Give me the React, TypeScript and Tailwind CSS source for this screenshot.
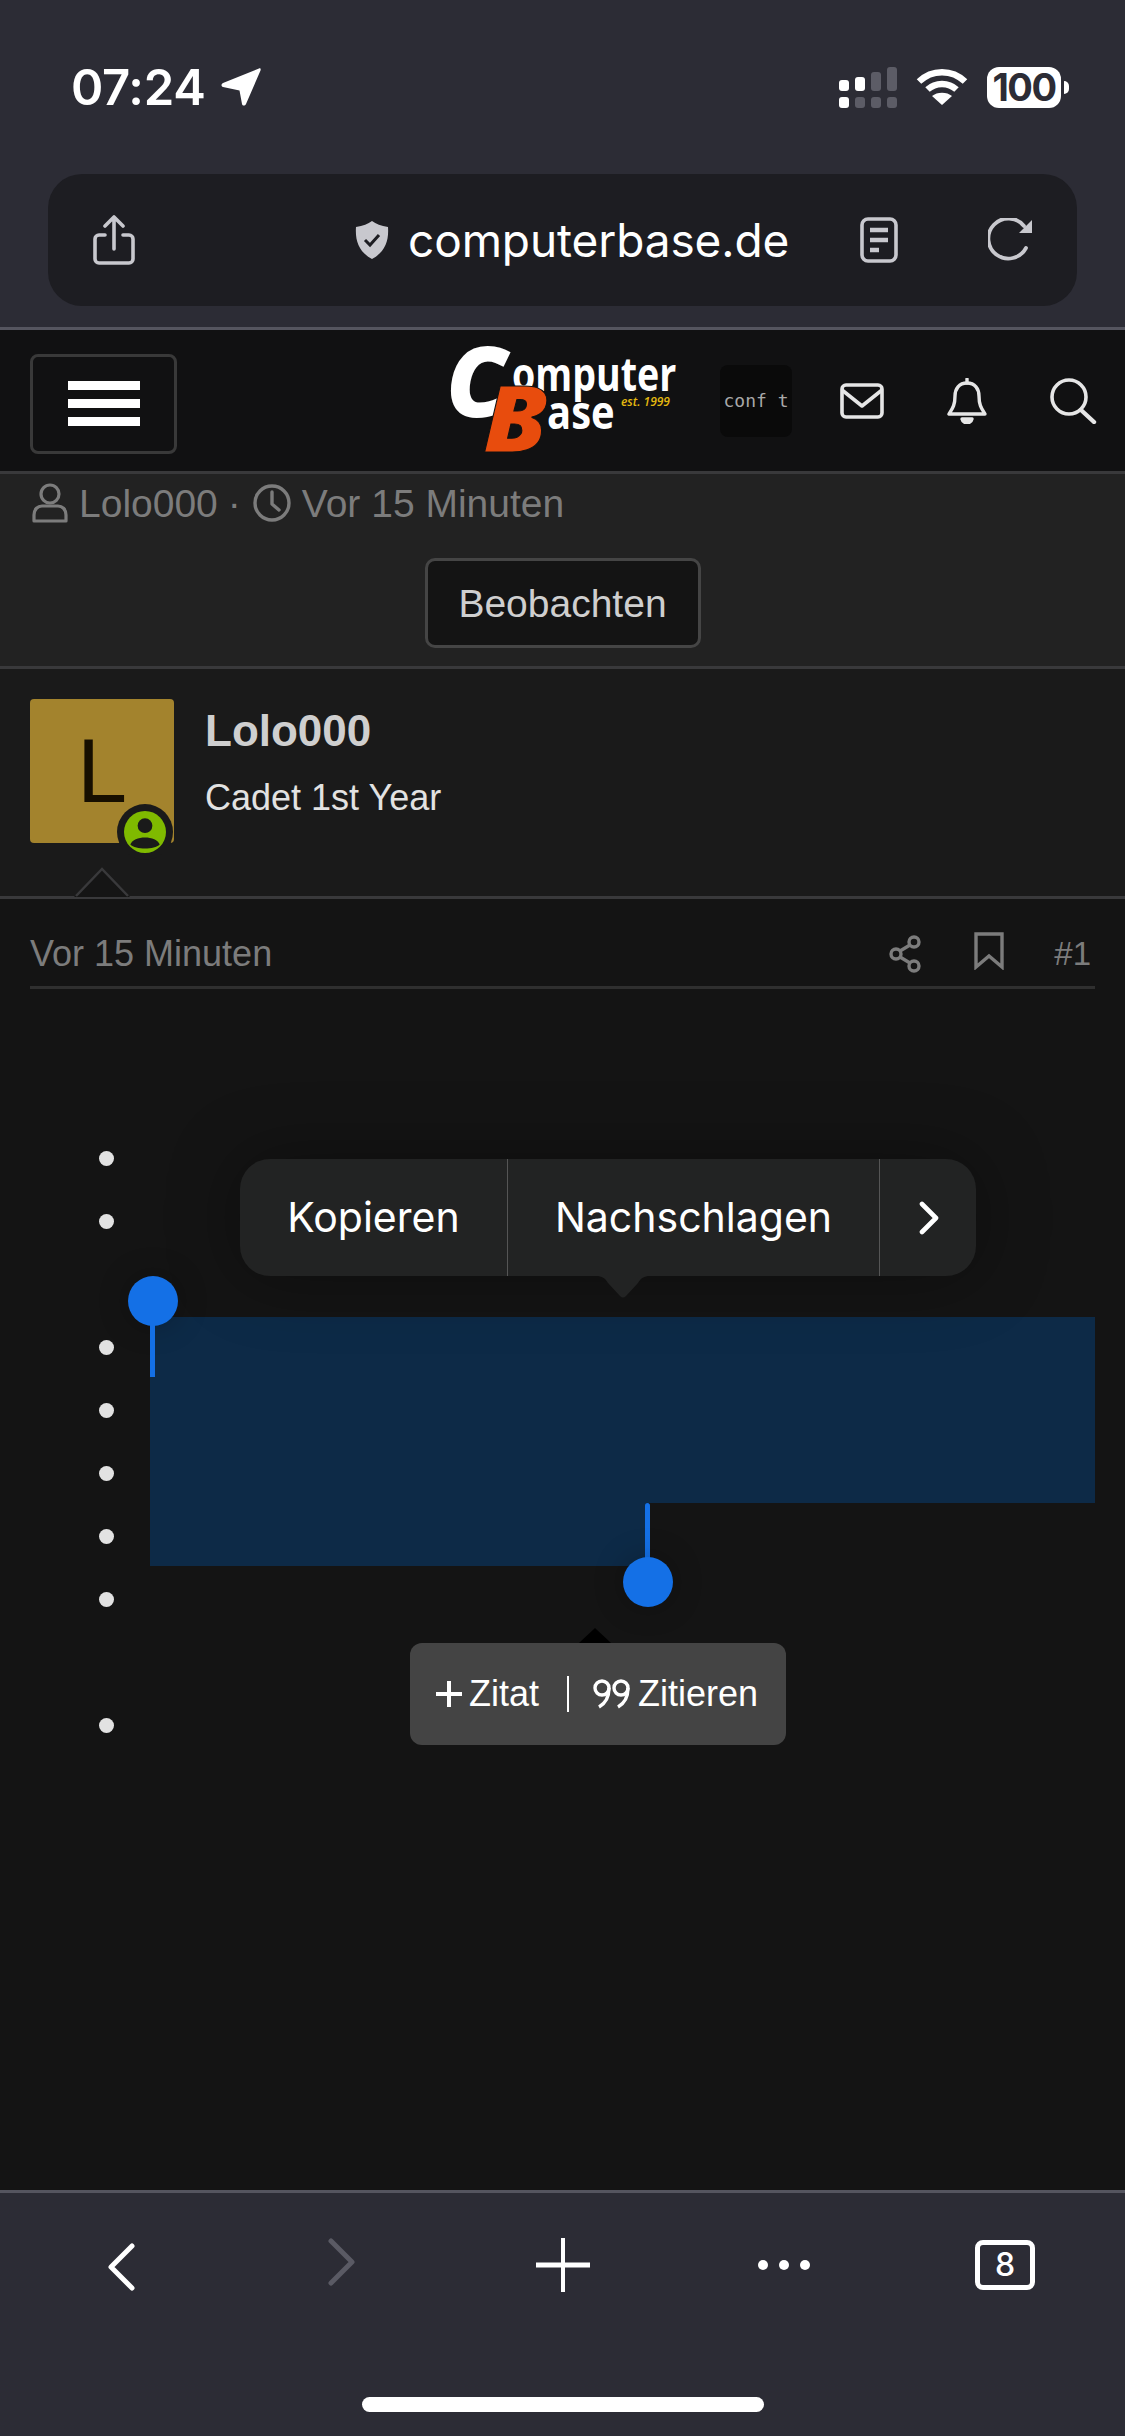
import React from "react";

const sf = "font-['Inter','Liberation_Sans',sans-serif]";
const web = "font-['Liberation_Sans','Arial',sans-serif]";

function Signal() {
  const bars = [
    ["h-[11px]", "bg-white", "bg-white"],
    ["h-[14px]", "bg-white", "bg-[#5c5c66]"],
    ["h-[19px]", "bg-[#5c5c66]", "bg-[#5c5c66]"],
    ["h-[24px]", "bg-[#5c5c66]", "bg-[#5c5c66]"],
  ];
  return (
    <div className="flex items-end gap-[6px]">
      {bars.map((b, i) => (
        <div key={i} className="flex flex-col items-center gap-[6px]">
          <div className={`w-[10px] rounded-[3px] ${b[0]} ${b[1]}`} />
          <div className={`w-[10px] h-[11px] rounded-[3px] ${b[2]}`} />
        </div>
      ))}
    </div>
  );
}

function Wifi() {
  return (
    <svg width="52" height="38" viewBox="0 0 52 38" fill="none" stroke="white" strokeWidth="6.5">
      <path d="M3 13.5C16 1 36 1 49 13.5" />
      <path d="M11.5 21.5C19.5 14 32.5 14 40.5 21.5" />
      <path d="M26 37L16 28C21 23.5 31 23.5 36 28Z" fill="white" stroke="none" />
    </svg>
  );
}

function Battery() {
  return (
    <div className="flex items-center gap-[3px]">
      <div className={`w-[74px] h-[41px] rounded-[12px] bg-white flex items-center justify-center text-[#2c2c35] text-[38px] font-bold tracking-[-1.5px] leading-none ${sf}`}>
        100
      </div>
      <div className="w-[5px] h-[13px] rounded-r-[5px] bg-white" />
    </div>
  );
}

function StatusBar() {
  return (
    <div className="h-[174px] pl-[71px] pr-[56px] flex items-center justify-between">
      <div className="flex items-center gap-[16px]">
        <span className={`text-[49px] font-semibold leading-none tracking-[-0.3px] text-white ${sf}`}>07:24</span>
        <svg width="40" height="38" viewBox="0 0 40 38" fill="white">
          <path d="M38 0.5C39.5 0 40 1 39.5 2.5L25 36C24 38 21.5 38 21 36L18.5 22.5L2 19C0 18.5 0 16 2 15Z" />
        </svg>
      </div>
      <div className="flex items-center gap-[19px]">
        <Signal />
        <Wifi />
        <Battery />
      </div>
    </div>
  );
}

function AddressBar() {
  return (
    <div className="mx-[48px] h-[132px] rounded-[34px] bg-[#1d1d22] flex items-center text-[#c8c8ce]">
      <svg className="ml-[44px]" width="44" height="50" viewBox="0 0 44 50" fill="none" stroke="currentColor" strokeWidth="3.6" strokeLinecap="round" strokeLinejoin="round">
        <path d="M13 20H7a4 4 0 0 0-4 4v20a4 4 0 0 0 4 4h30a4 4 0 0 0 4-4V24a4 4 0 0 0-4-4h-6" />
        <path d="M22 34V3M13 11l9-9 9 9" />
      </svg>
      <svg className="ml-[219px]" width="34" height="38" viewBox="0 0 34 38">
        <path d="M17 0C21 3 26 5 33 6C34 20 30 31 17 38C4 31 0 20 1 6C8 5 13 3 17 0Z" fill="currentColor" />
        <path d="M10 19l5 5 9-10" fill="none" stroke="#1d1d22" strokeWidth="3" />
      </svg>
      <span className={`ml-[19px] w-[382px] text-[46px] leading-none text-white whitespace-nowrap tracking-[-0.1px] ${sf}`}>computerbase.de</span>
      <svg className="ml-[70px]" width="38" height="46" viewBox="0 0 38 46" fill="none">
        <rect x="2" y="2" width="34" height="42" rx="6" stroke="currentColor" strokeWidth="3.6" />
        <path d="M10 13h18M10 23h18M10 33h9" stroke="currentColor" strokeWidth="4.5" />
      </svg>
      <svg className="ml-[90px]" width="46" height="44" viewBox="0 0 46 44" fill="none" stroke="currentColor" strokeWidth="3.8" strokeLinecap="round">
        <path d="M38 30A20 20 0 1 1 36 8" />
        <path d="M44 2V15H31Z" fill="currentColor" stroke="none" />
      </svg>
    </div>
  );
}

function Logo() {
  const f = "font-['Open_Sans','Liberation_Sans',sans-serif]";
  return (
    <div className={`relative w-[230px] h-[104px] leading-none ${f}`}>
      <span className="absolute left-[63px] top-[1px] text-[47px] font-bold text-white origin-left scale-x-[0.8] whitespace-nowrap">omputer</span>
      <span className="absolute left-[-3px] top-[-18px] text-[97px] font-extrabold italic text-white">C</span>
      <span className="absolute left-[98px] top-[39px] text-[47px] font-bold text-white origin-left scale-x-[0.85]">ase</span>
      <span className="absolute left-[34px] top-[22px] text-[92px] font-extrabold italic text-[#e84c0d] origin-left scale-x-[1.12] [-webkit-text-stroke:1px_#111]">B</span>
      <span className="absolute left-[172px] top-[47px] text-[12px] font-semibold italic text-[#e4b90f] whitespace-nowrap">est. 1999</span>
    </div>
  );
}

function HeaderBar() {
  return (
    <header className="relative h-[144px] bg-[#111112] border-b-[3px] border-[#39393b] flex items-center">
      <div className="ml-[30px] mt-[6px] w-[147px] h-[100px] rounded-[8px] border-[3px] border-[#393939] flex flex-col items-center justify-center gap-[9px]">
        <div className="w-[72px] h-[9px] bg-white" />
        <div className="w-[72px] h-[9px] bg-white" />
        <div className="w-[72px] h-[9px] bg-white" />
      </div>
      <div className="ml-[272px]"><Logo /></div>
      <div className="ml-[41px] w-[72px] h-[72px] rounded-[8px] bg-[#0a0a0a] flex items-center justify-center overflow-hidden">
        <span className="font-['DejaVu_Sans_Mono',monospace] text-[18px] text-[#a8a8a8] whitespace-pre leading-none">conf t</span>
      </div>
      <svg className="ml-[48px]" width="44" height="36" viewBox="0 0 44 36" fill="none" stroke="#e6e6e6" strokeWidth="3.6" strokeLinejoin="round">
        <rect x="2" y="2" width="40" height="32" rx="4" />
        <path d="M2 7L22 23L42 7" />
      </svg>
      <svg className="ml-[63px]" width="40" height="46" viewBox="0 0 40 46" fill="none" stroke="#e6e6e6" strokeWidth="3.4" strokeLinejoin="round">
        <path d="M20 5C12 5 8 11 8 18C8 28 5 31 2 36H38C35 31 32 28 32 18C32 11 28 5 20 5Z" />
        <path d="M20 1V5" strokeLinecap="round" />
        <path d="M15 41C16 46 24 46 25 41Z" fill="#e6e6e6" />
      </svg>
      <svg className="ml-[62px]" width="48" height="46" viewBox="0 0 48 46" fill="none" stroke="#e6e6e6" strokeWidth="3.6" strokeLinecap="round">
        <circle cx="20" cy="19" r="17" />
        <path d="M32 32L45 44" strokeWidth="4.4" />
      </svg>
    </header>
  );
}

function UserOutline() {
  return (
    <svg width="36" height="40" viewBox="0 0 36 40" fill="none" stroke="#7c7c7c" strokeWidth="3.2">
      <circle cx="18" cy="11" r="9" />
      <path d="M2 38V32C2 26 6 23 10 23H26C30 23 34 26 34 32V38Z" strokeLinejoin="round" />
    </svg>
  );
}

function ThreadInfo() {
  return (
    <section className="h-[195px] bg-[#222222] border-b-[3px] border-[#39393b]">
      <div className={`h-[58px] pl-[32px] flex items-center text-[39px] leading-none text-[#7c7c7c] ${web}`}>
        <UserOutline />
        <span className="ml-[11px]">Lolo000</span>
        <span className="ml-[10px]">·</span>
        <svg className="ml-[12px]" width="38" height="38" viewBox="0 0 38 38" fill="none" stroke="#7c7c7c" strokeWidth="3.4" strokeLinecap="round" strokeLinejoin="round">
          <circle cx="19" cy="19" r="17" />
          <path d="M19 8V20L26 26" />
        </svg>
        <span className="ml-[11px]">Vor 15 Minuten</span>
      </div>
      <div className="flex justify-center mt-[26px]">
        <div className={`w-[276px] h-[90px] pt-[2px] rounded-[10px] bg-[#141414] border-[3px] border-[#454545] flex items-center justify-center text-[39px] text-[#cfcfcf] ${web}`}>
          Beobachten
        </div>
      </div>
    </section>
  );
}

function UserCard() {
  return (
    <section className="relative h-[230px] bg-[#1a1a1a] border-b-[3px] border-[#39393b] pt-[30px] pl-[30px] flex">
      <div className="relative w-[144px] h-[144px] rounded-[4px] bg-[#a3832d] flex items-center justify-center">
        <span className={`text-[90px] leading-none text-[#170f00] ${web}`}>L</span>
        <div className="absolute right-[1px] bottom-[-17px] w-[56px] h-[56px] rounded-full bg-[#1a1a1a] flex items-center justify-center">
          <svg width="42" height="42" viewBox="0 0 40 40">
            <circle cx="20" cy="20" r="20" fill="#7fba00" />
            <circle cx="20" cy="14" r="7" fill="#1a1a1a" />
            <path d="M6 32C9 23 31 23 34 32C29 37 11 37 6 32Z" fill="#1a1a1a" />
          </svg>
        </div>
      </div>
      <div className={`ml-[31px] ${web}`}>
        <div className="mt-[9px] text-[44px] leading-[46px] font-bold text-[#cfcfcf]">Lolo000</div>
        <div className="mt-[24px] text-[36px] leading-[40px] text-[#e2e2e2]">Cadet 1st Year</div>
      </div>
      <svg className="absolute left-[74px] bottom-[-3px]" width="56" height="32" viewBox="0 0 56 32">
        <path d="M0 30L28 2L56 30Z" fill="#151515" />
        <path d="M2 29L28 2L54 29" fill="none" stroke="#39393b" strokeWidth="2.5" />
      </svg>
    </section>
  );
}

function PostHead() {
  return (
    <div className={`mx-[30px] h-[90px] pt-[22px] border-b-[3px] border-[#2f2f2f] flex items-center text-[36px] text-[#7c7c7c] ${web}`}>
      <span>Vor 15 Minuten</span>
      <svg className="ml-auto" width="34" height="38" viewBox="0 0 34 38" fill="none" stroke="#7c7c7c" strokeWidth="3.4">
        <circle cx="26" cy="7" r="5" />
        <circle cx="8" cy="19" r="5" />
        <circle cx="26" cy="31" r="5" />
        <path d="M12 16L22 10M12 22L22 28" />
      </svg>
      <svg className="ml-[52px] mt-[-6px]" width="30" height="38" viewBox="0 0 30 38" fill="none" stroke="#7c7c7c" strokeWidth="3.4" strokeLinejoin="miter">
        <path d="M2 2H28V35L15 24L2 35Z" />
      </svg>
      <span className="ml-[50px] text-[33px] mr-[4px]">#1</span>
    </div>
  );
}

function Bullets() {
  const items = [true, true, false, true, true, true, true, true, false, true];
  return (
    <ul className="pt-[138px] pl-[99px]">
      {items.map((v, i) => (
        <li key={i} className="h-[63px] flex items-center">
          {v && <span className="w-[15px] h-[15px] rounded-full bg-[#e2e2e2]" />}
        </li>
      ))}
    </ul>
  );
}

function Overlays() {
  return (
    <>
      {/* text selection */}
      <div className="absolute left-[150px] top-[1317px] w-[945px] h-[186px] bg-[#0d2a47]" />
      <div className="absolute left-[150px] top-[1503px] w-[497px] h-[63px] bg-[#0d2a47]" />
      {/* handles */}
      <div className="absolute left-[128px] top-[1276px] w-[50px] h-[50px] rounded-full bg-[#1470e6] shadow-[0_0_30px_rgba(0,0,0,0.25)]" />
      <div className="absolute left-[150px] top-[1320px] w-[5px] h-[57px] bg-[#1470e6]" />
      <div className="absolute left-[645px] top-[1503px] w-[5px] h-[60px] rounded-t-full bg-[#1470e6]" />
      <div className="absolute left-[623px] top-[1557px] w-[50px] h-[50px] rounded-full bg-[#1470e6] shadow-[0_0_30px_rgba(0,0,0,0.25)]" />
      {/* callout */}
      <div className={`absolute left-[240px] top-[1159px] w-[736px] h-[117px] rounded-[30px] bg-[#222323] shadow-[0_0_70px_rgba(0,0,0,0.35)] flex items-center text-[41px] text-white ${sf}`}>
        <div className="w-[268px] h-full flex items-center justify-center border-r-[1.5px] border-[#555]">Kopieren</div>
        <div className="w-[372px] h-full flex items-center justify-center border-r-[1.5px] border-[#555]">Nachschlagen</div>
        <div className="flex-1 flex items-center justify-center pl-[2px]">
          <svg width="20" height="34" viewBox="0 0 20 34" fill="none" stroke="white" strokeWidth="4.6" strokeLinecap="round" strokeLinejoin="round">
            <path d="M3 3L17 17L3 31" />
          </svg>
        </div>
      </div>
      <svg className="absolute left-[596px] top-[1276px]" width="54" height="22" viewBox="0 0 54 22">
        <path d="M0 0C6 0 9 2 12 7L24 20C26 22 28 22 30 20L42 7C45 2 48 0 54 0Z" fill="#222323" />
      </svg>
      {/* quote tooltip */}
      <svg className="absolute left-[579px] top-[1628px]" width="32" height="15" viewBox="0 0 32 15">
        <path d="M16 0L32 15H0Z" fill="#000" />
      </svg>
      <div className={`absolute left-[410px] top-[1643px] w-[376px] h-[102px] rounded-[12px] bg-[#444444] flex items-center pl-[26px] text-[36px] text-white ${web}`}>
        <svg width="26" height="26" viewBox="0 0 26 26" stroke="white" strokeWidth="4">
          <path d="M0 13H26M13 0V26" />
        </svg>
        <span className="ml-[7px]">Zitat</span>
        <div className="ml-[28px] w-[2px] h-[36px] bg-white" />
        <svg className="ml-[24px]" width="37" height="30" viewBox="0 0 37 30" fill="none" stroke="white" strokeWidth="3.4">
          <circle cx="9" cy="9" r="7" />
          <path d="M16 9C16 18 13 24 6 28" />
          <circle cx="28" cy="9" r="7" />
          <path d="M35 9C35 18 32 24 25 28" />
        </svg>
        <span className="ml-[8px]">Zitieren</span>
      </div>
    </>
  );
}

function BottomBar() {
  return (
    <footer className="h-[246px] bg-[#2c2c35] border-t-[3px] border-[#55555f] relative">
      <div className="h-[204px] flex items-start pt-[45px] text-white">
        <svg className="ml-[106px] mt-[5px]" width="30" height="48" viewBox="0 0 30 48" fill="none" stroke="white" strokeWidth="5" strokeLinecap="round" strokeLinejoin="round">
          <path d="M26 3L5 24L26 45" />
        </svg>
        <svg className="ml-[191px]" width="30" height="48" viewBox="0 0 30 48" fill="none" stroke="#5a5a64" strokeWidth="5" strokeLinecap="round" strokeLinejoin="round">
          <path d="M4 3L25 24L4 45" />
        </svg>
        <svg className="ml-[179px]" width="54" height="54" viewBox="0 0 54 54" stroke="white">
          <path d="M27 0V54" strokeWidth="4" />
          <path d="M0 27H54" strokeWidth="5" />
        </svg>
        <div className="ml-[168px] mt-[22px] flex gap-[11px]">
          <div className="w-[10px] h-[10px] rounded-full bg-white" />
          <div className="w-[10px] h-[10px] rounded-full bg-white" />
          <div className="w-[10px] h-[10px] rounded-full bg-white" />
        </div>
        <div className={`ml-[165px] mt-[2px] w-[60px] h-[50px] rounded-[8px] border-[5px] border-white flex items-center justify-center text-[32px] font-medium leading-none text-white ${sf}`}>8</div>
      </div>
      <div className="flex justify-center">
        <div className="w-[402px] h-[15px] rounded-full bg-white" />
      </div>
    </footer>
  );
}

export default function App() {
  return (
    <div className="relative w-[1125px] h-[2436px] overflow-hidden flex flex-col bg-[#141414]">
      <div className="h-[330px] bg-[#2c2c35] border-b-[3px] border-[#55555f]">
        <StatusBar />
        <AddressBar />
      </div>
      <HeaderBar />
      <ThreadInfo />
      <UserCard />
      <main className="flex-1 bg-[#141414]">
        <PostHead />
        <Bullets />
      </main>
      <BottomBar />
      <Overlays />
    </div>
  );
}
